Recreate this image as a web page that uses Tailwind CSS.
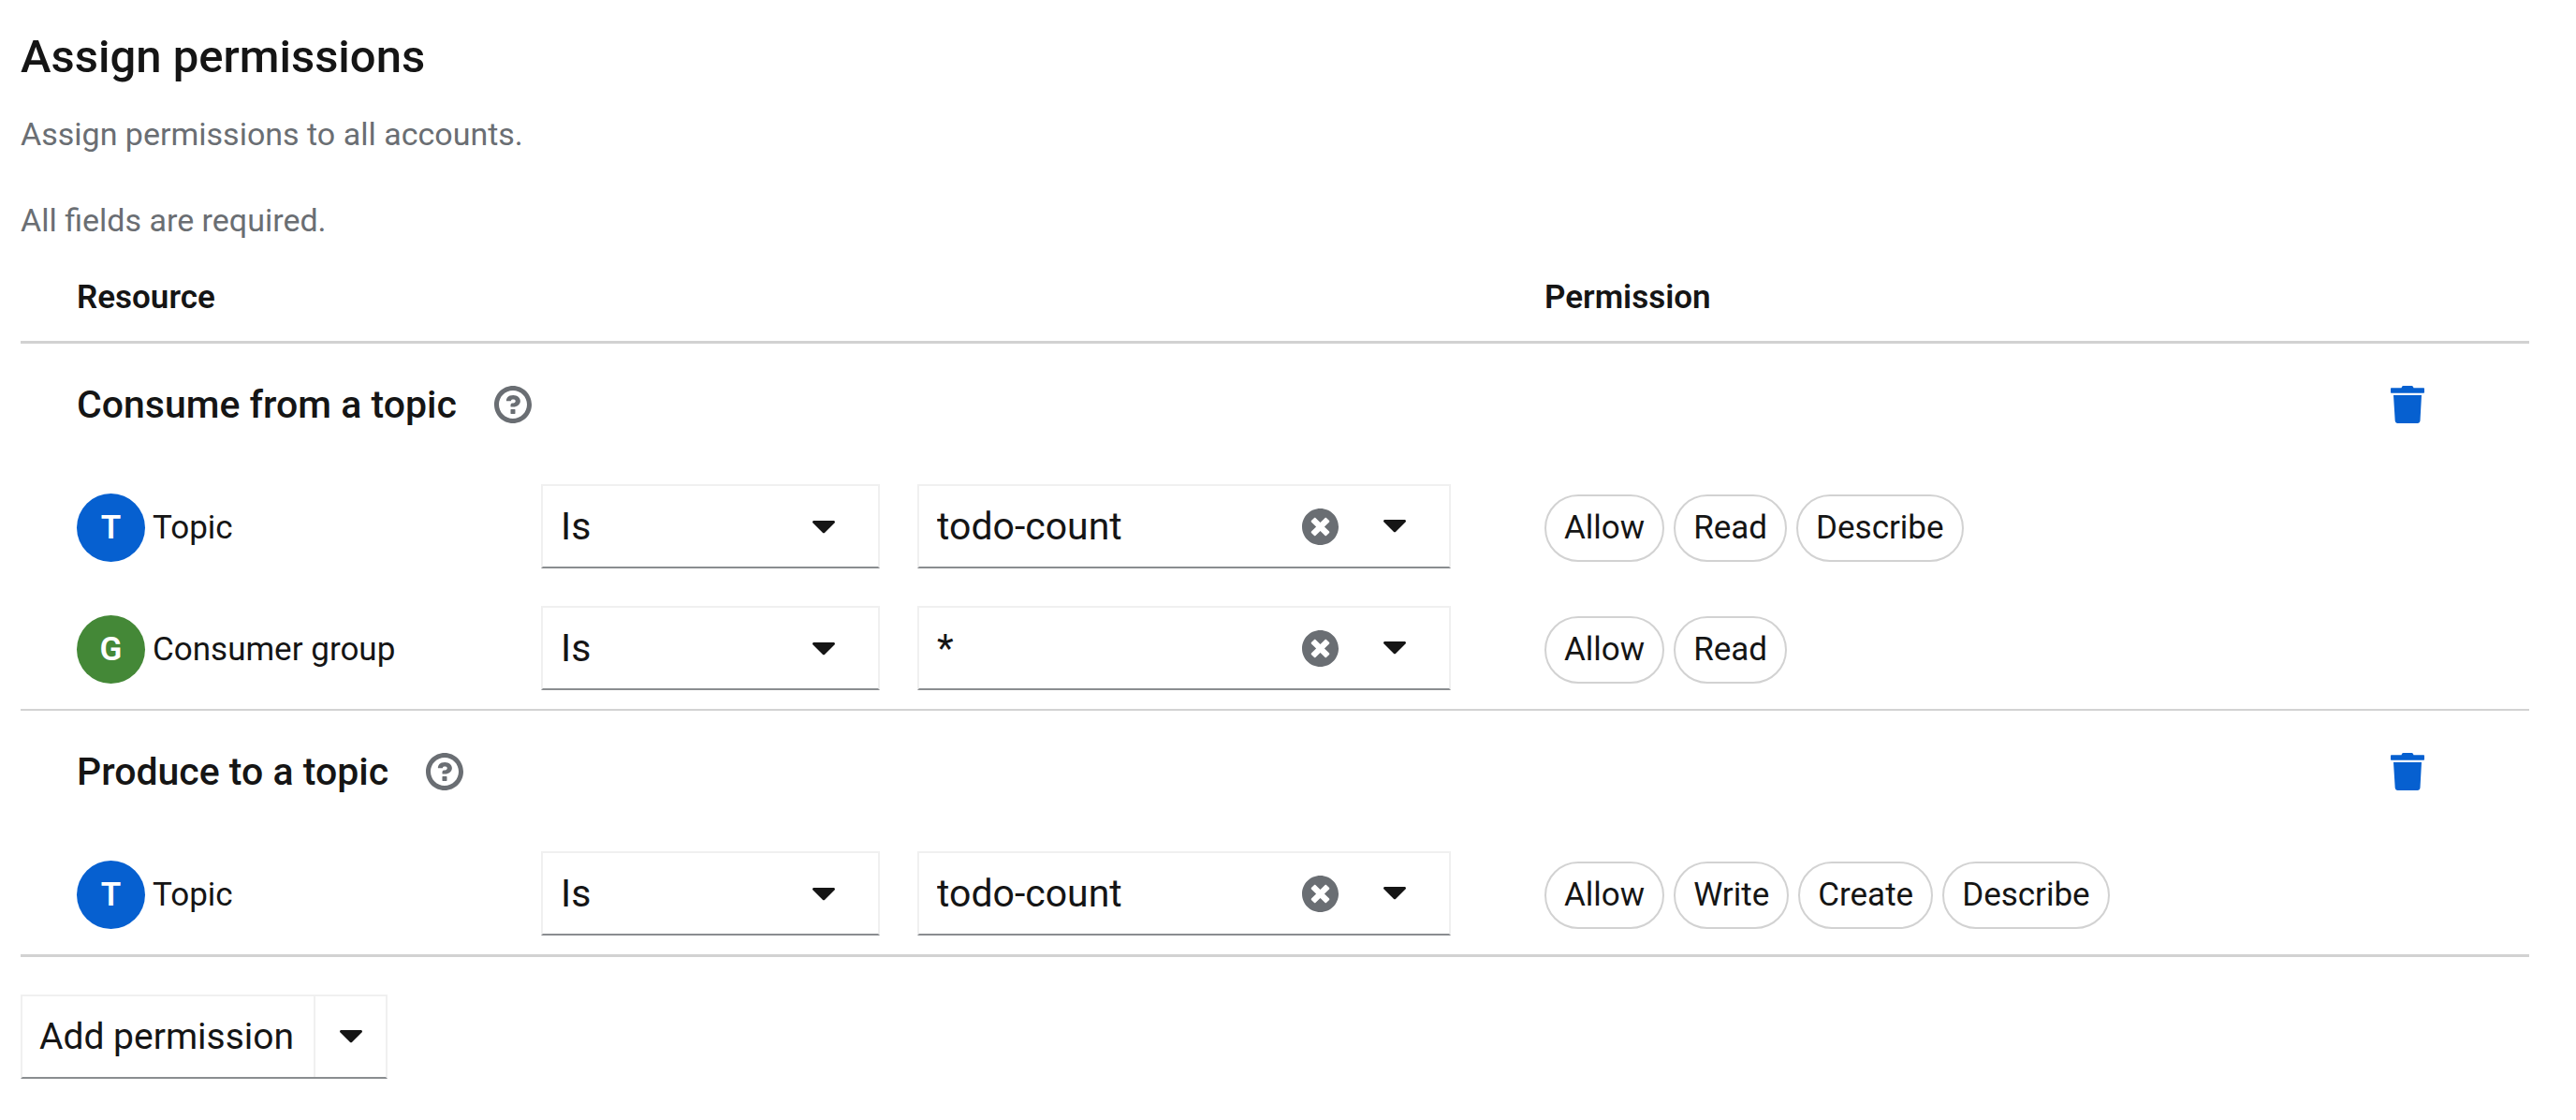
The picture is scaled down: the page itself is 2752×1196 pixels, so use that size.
<!DOCTYPE html>
<html lang="en">
<head>
<meta charset="utf-8">
<meta name="viewport" content="width=device-width, initial-scale=1">
<title>Assign permissions</title>
<script src="https://cdn.jsdelivr.net/npm/@tailwindcss/browser@4"></script>
</head>
<body class="bg-white font-[Roboto,sans-serif] text-[#151515]">
<svg class="hidden" aria-hidden="true">
  <symbol id="caret" viewBox="0 0 24 14"><path d="M1.500 0h21c1.300 0 2 1.600 1 2.500L13.200 12.800c-.7.700-1.700.700-2.400 0L.5 2.500C-.5 1.600.2 0 1.500 0z" fill="currentColor"/></symbol>
  <symbol id="help" viewBox="0 0 1024 1024"><path fill="currentColor" d="M521.300 576C627.500 576 713.700 502 713.700 413.700C713.700 325.400 627.600 253.600 521.300 253.600C366 253.600 334.500 337.700 329.200 407.200C329.200 414.300 335.200 416 343.500 416H445C450.500 416 458 415.500 460.800 406.500C460.800 362.600 582.900 357.100 582.900 413.600C582.900 441.900 556.200 470.900 521.300 473C486.400 475.100 447.300 479.800 447.300 521.700V553.800C447.300 570.800 456.100 576 472 576C487.900 576 521.300 576 521.300 576M575.300 751.300V655.300C575.313 651.055 573.620 646.982 570.600 644C567.638 640.947 563.553 639.247 559.300 639.300H463.300C459.055 639.287 454.982 640.980 452 644C448.947 646.962 447.247 651.047 447.300 655.300V751.300C447.287 755.545 448.980 759.618 452 762.600C454.962 765.653 459.047 767.353 463.300 767.300H559.300C563.553 767.347 567.638 765.648 570.600 762.600C573.659 759.640 575.358 755.554 575.300 751.300M512 896C300.200 896 128 723.900 128 512C128 300.300 300.200 128 512 128C723.800 128 896 300.200 896 512C896 723.800 723.700 896 512 896M512.100 0C229.700 0 0 229.800 0 512C0 794.200 229.800 1024 512.100 1024C794.400 1024 1024 794.300 1024 512C1024 229.700 794.400 0 512.100 0"/></symbol>
  <symbol id="clear" viewBox="8 8 496 496"><path fill="currentColor" d="M256 8C119 8 8 119 8 256s111 248 248 248 248-111 248-248S393 8 256 8zm121.600 313.100c4.700 4.700 4.700 12.300 0 17L338 377.600c-4.700 4.700-12.300 4.700-17 0L256 312l-65.100 65.600c-4.700 4.700-12.300 4.700-17 0L134.400 338c-4.700-4.700-4.700-12.300 0-17l65.600-65-65.600-65.100c-4.700-4.700-4.700-12.300 0-17l39.600-39.600c4.700-4.700 12.300-4.700 17 0l65 65.700 65.100-65.600c4.700-4.700 12.300-4.700 17 0l39.600 39.600c4.700 4.700 4.700 12.300 0 17L312 256l65.600 65.100z"/></symbol>
  <symbol id="trash" viewBox="0 0 36 40"><path fill="currentColor" d="M11.500 2.200L12 1C12.300.4 12.900 0 13.600 0h8.800c.7 0 1.300.4 1.600 1l.5 1.200H35c.6 0 1 .4 1 1v3.600c0 .6-.4 1-1 1H1c-.6 0-1-.4-1-1V3.200c0-.6.4-1 1-1zM3 10h30l-1.500 27.200c-.1 1.600-1.300 2.800-2.900 2.800H7.600C6 40 4.800 38.800 4.700 37.200z"/></symbol>
</svg>

<main class="pl-[22px] pr-[50px] pt-7 pb-11">
  <h1 class="text-[49px] leading-[66px] font-medium">Assign permissions</h1>
  <p class="mt-[23px] text-[34px] leading-[52px] text-[#6a6e73]">Assign permissions to all accounts.</p>
  <p class="mt-10 text-[34px] leading-[52px] text-[#6a6e73]">All fields are required.</p>

  <table class="mt-[10px] w-full table-fixed border-separate border-spacing-0 text-left">
    <colgroup>
      <col class="w-[556px]"><col class="w-[402px]"><col class="w-[670px]"><col><col class="w-[148px]">
    </colgroup>
    <thead>
      <tr class="h-[96px] text-[35px] leading-[52px] *:border-b-3 *:border-[#d2d2d2]">
        <th scope="col" colspan="3" class="pl-[60px] font-semibold">Resource</th>
        <th scope="col" class="font-semibold">Permission</th>
        <td></td>
      </tr>
    </thead>
    <tbody>
      <tr class="h-[130px]">
        <th scope="rowgroup" colspan="4" class="pl-[60px] font-medium">
          <div class="flex items-center gap-10 text-[41px] leading-[52px]">Consume from a topic
            <button type="button" aria-label="About consuming from a topic" class="text-[#6a6e73]"><svg class="size-10"><use href="#help"/></svg></button>
          </div>
        </th>
        <td><button type="button" aria-label="Delete consume from a topic" class="block text-[#0660d0]"><svg class="h-10 w-9"><use href="#trash"/></svg></button></td>
      </tr>
      <tr class="h-[130px]">
        <td class="pl-[60px] pt-[3px]">
          <div class="flex items-center gap-2 text-[35px] leading-[52px]"><span class="flex size-[73px] items-center justify-center rounded-full bg-[#0660d0] font-semibold text-white">T</span>Topic</div>
        </td>
        <td>
          <div class="relative w-[362px]">
            <select aria-label="Topic match" class="block h-[90px] w-full appearance-none border-2 border-[#f0f0f0] border-b-[#8a8d90] bg-white pl-[19px] text-[41px] leading-[60px]"><option>Is</option><option>Starts with</option></select>
            <svg class="pointer-events-none absolute top-[39px] right-12 h-[14px] w-6"><use href="#caret"/></svg>
          </div>
        </td>
        <td>
          <div class="flex h-[90px] w-[570px] items-center border-2 border-[#f0f0f0] border-b-[#8a8d90]">
            <input type="text" aria-label="Topic name" value="todo-count" class="min-w-0 flex-1 pl-[19px] text-[41px] leading-[60px]">
            <button type="button" aria-label="Clear topic name" class="mr-12 text-[#6a6e73]"><svg class="size-[39px]"><use href="#clear"/></svg></button>
            <button type="button" aria-label="Show topics" class="mr-[46px]"><svg class="h-[14px] w-6"><use href="#caret"/></svg></button>
          </div>
        </td>
        <td colspan="2" class="pt-[3px]">
          <ul class="flex gap-[10px] text-[35px] leading-[52px]">
            <li class="rounded-full border-2 border-[#d2d2d2] px-[19px] py-[8px]">Allow</li>
            <li class="rounded-full border-2 border-[#d2d2d2] px-[19px] py-[8px]">Read</li>
            <li class="rounded-full border-2 border-[#d2d2d2] px-[19px] py-[8px]">Describe</li>
          </ul>
        </td>
      </tr>
      <tr class="h-[132px] *:border-b-2 *:border-[#d2d2d2]">
        <td class="pl-[60px] pt-[3px]">
          <div class="flex items-center gap-2 text-[35px] leading-[52px]"><span class="flex size-[73px] items-center justify-center rounded-full bg-[#448837] font-semibold text-white">G</span>Consumer group</div>
        </td>
        <td>
          <div class="relative w-[362px]">
            <select aria-label="Consumer group match" class="block h-[90px] w-full appearance-none border-2 border-[#f0f0f0] border-b-[#8a8d90] bg-white pl-[19px] text-[41px] leading-[60px]"><option>Is</option><option>Starts with</option></select>
            <svg class="pointer-events-none absolute top-[39px] right-12 h-[14px] w-6"><use href="#caret"/></svg>
          </div>
        </td>
        <td>
          <div class="flex h-[90px] w-[570px] items-center border-2 border-[#f0f0f0] border-b-[#8a8d90]">
            <input type="text" aria-label="Consumer group name" value="*" class="min-w-0 flex-1 pl-[19px] text-[41px] leading-[60px]">
            <button type="button" aria-label="Clear consumer group name" class="mr-12 text-[#6a6e73]"><svg class="size-[39px]"><use href="#clear"/></svg></button>
            <button type="button" aria-label="Show consumer groups" class="mr-[46px]"><svg class="h-[14px] w-6"><use href="#caret"/></svg></button>
          </div>
        </td>
        <td colspan="2" class="pt-[3px]">
          <ul class="flex gap-[10px] text-[35px] leading-[52px]">
            <li class="rounded-full border-2 border-[#d2d2d2] px-[19px] py-[8px]">Allow</li>
            <li class="rounded-full border-2 border-[#d2d2d2] px-[19px] py-[8px]">Read</li>
          </ul>
        </td>
      </tr>
    </tbody>
    <tbody>
      <tr class="h-[130px]">
        <th scope="rowgroup" colspan="4" class="pl-[60px] font-medium">
          <div class="flex items-center gap-10 text-[41px] leading-[52px]">Produce to a topic
            <button type="button" aria-label="About producing to a topic" class="text-[#6a6e73]"><svg class="size-10"><use href="#help"/></svg></button>
          </div>
        </th>
        <td><button type="button" aria-label="Delete produce to a topic" class="block text-[#0660d0]"><svg class="h-10 w-9"><use href="#trash"/></svg></button></td>
      </tr>
      <tr class="h-[133px] *:border-b-3 *:border-[#d2d2d2]">
        <td class="pl-[60px] pt-[3px]">
          <div class="flex items-center gap-2 text-[35px] leading-[52px]"><span class="flex size-[73px] items-center justify-center rounded-full bg-[#0660d0] font-semibold text-white">T</span>Topic</div>
        </td>
        <td>
          <div class="relative w-[362px]">
            <select aria-label="Topic match" class="block h-[90px] w-full appearance-none border-2 border-[#f0f0f0] border-b-[#8a8d90] bg-white pl-[19px] text-[41px] leading-[60px]"><option>Is</option><option>Starts with</option></select>
            <svg class="pointer-events-none absolute top-[39px] right-12 h-[14px] w-6"><use href="#caret"/></svg>
          </div>
        </td>
        <td>
          <div class="flex h-[90px] w-[570px] items-center border-2 border-[#f0f0f0] border-b-[#8a8d90]">
            <input type="text" aria-label="Topic name" value="todo-count" class="min-w-0 flex-1 pl-[19px] text-[41px] leading-[60px]">
            <button type="button" aria-label="Clear topic name" class="mr-12 text-[#6a6e73]"><svg class="size-[39px]"><use href="#clear"/></svg></button>
            <button type="button" aria-label="Show topics" class="mr-[46px]"><svg class="h-[14px] w-6"><use href="#caret"/></svg></button>
          </div>
        </td>
        <td colspan="2" class="pt-[3px]">
          <ul class="flex gap-[10px] text-[35px] leading-[52px]">
            <li class="rounded-full border-2 border-[#d2d2d2] px-[19px] py-[8px]">Allow</li>
            <li class="rounded-full border-2 border-[#d2d2d2] px-[19px] py-[8px]">Write</li>
            <li class="rounded-full border-2 border-[#d2d2d2] px-[19px] py-[8px]">Create</li>
            <li class="rounded-full border-2 border-[#d2d2d2] px-[19px] py-[8px]">Describe</li>
          </ul>
        </td>
      </tr>
    </tbody>
  </table>

  <div class="mt-10 inline-flex h-[90px] border-2 border-[#f0f0f0] border-b-[#8a8d90]">
    <button type="button" class="pr-[21px] pl-[18px] text-[39px] leading-[60px]">Add permission</button>
    <button type="button" aria-label="More permission options" class="flex w-[77px] items-center justify-center border-l-2 border-[#f0f0f0]"><svg class="h-[14px] w-6"><use href="#caret"/></svg></button>
  </div>
</main>
</body>
</html>
